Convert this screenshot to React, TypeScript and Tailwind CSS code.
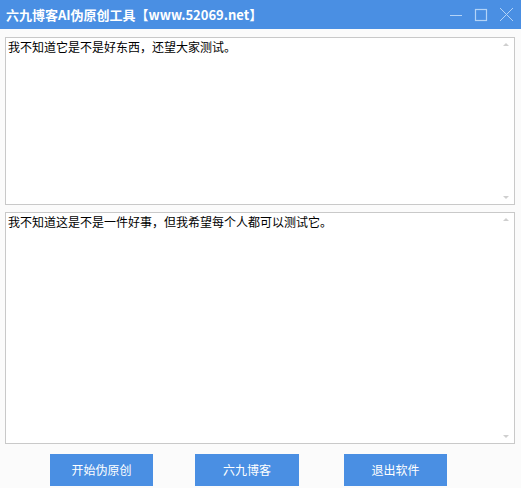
import React from "react";

const font = { fontFamily: '"Noto Sans CJK SC", "Noto Sans", sans-serif' };

function Box({ text, h }: { text: string; h: string }) {
  return (
    <div className={`relative w-[510px] ${h} border border-[#c9c9c9] bg-white`}>
      <div className="pl-[2px] pt-[2px] text-[12px] leading-[14px] text-black">{text}</div>
      <div className="absolute right-[5px] top-[5px] h-0 w-0 border-x-[3px] border-b-[3px] border-x-transparent border-b-[#cfcfcf]" />
      <div className="absolute right-[5px] bottom-[5px] h-0 w-0 border-x-[3px] border-t-[3px] border-x-transparent border-t-[#cfcfcf]" />
    </div>
  );
}

export default function App() {
  return (
    <div className="w-[521px] h-[488px] bg-[#fbfbfb] overflow-hidden" style={font}>
      <div className="flex h-[29px] items-center justify-between bg-[#4a8fe3] pl-[6px] pr-[7px]">
        <div className="text-[13px] font-bold text-white">六九博客AI伪原创工具【www.52069.net】</div>
        <div className="flex items-center gap-[11px]">
          <svg width="14" height="14" viewBox="0 0 14 14"><path d="M1 7.5h12" stroke="#b3d3f7" strokeWidth="1" /></svg>
          <svg width="14" height="14" viewBox="0 0 14 14"><rect x="1.5" y="1.5" width="11" height="11" fill="none" stroke="#b3d3f7" strokeWidth="1.2" /></svg>
          <svg width="15" height="15" viewBox="0 0 15 15"><path d="M1 1l13 13M14 1L1 14" stroke="#b3d3f7" strokeWidth="1" /></svg>
        </div>
      </div>
      <div className="flex flex-col gap-[7px] pl-[5px] pt-[8px]">
        <Box text="我不知道它是不是好东西，还望大家测试。" h="h-[168px]" />
        <Box text="我不知道这是不是一件好事，但我希望每个人都可以测试它。" h="h-[232px]" />
      </div>
      <div className="mt-[10px] flex pl-[50px] gap-[42px]">
        <button className="h-[32px] w-[103px] bg-[#4a8fe3] text-[12px] text-white">开始伪原创</button>
        <button className="h-[32px] w-[104px] bg-[#4a8fe3] text-[12px] text-white">六九博客</button>
        <button className="ml-[3px] h-[32px] w-[103px] bg-[#4a8fe3] text-[12px] text-white">退出软件</button>
      </div>
    </div>
  );
}
